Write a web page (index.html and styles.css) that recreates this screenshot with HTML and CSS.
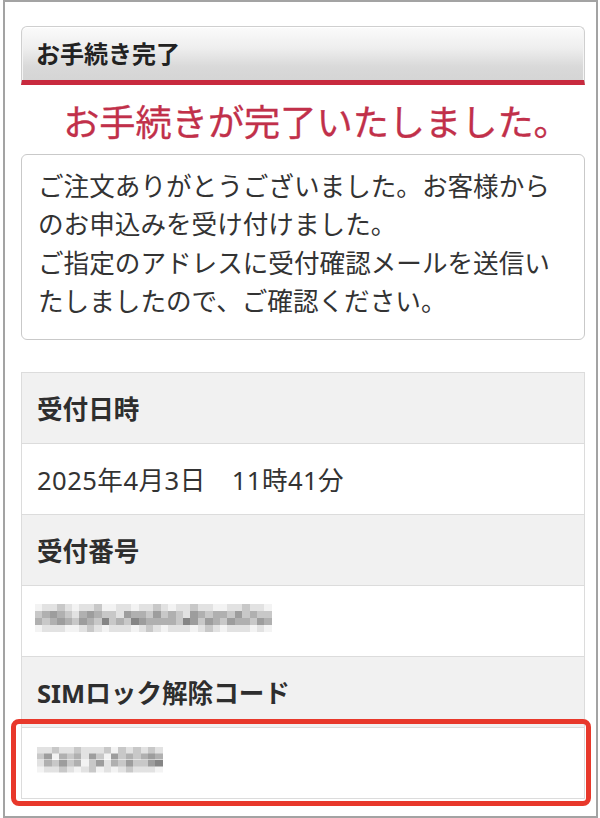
FILE: index.html
```html
<!DOCTYPE html>
<html lang="ja">
<head>
<meta charset="utf-8">
<title>お手続き完了</title>
<link rel="stylesheet" href="styles.css">
</head>
<body>
<div class="frame">
  <div class="panel-head">お手続き完了</div>
  <p class="done-title">お手続きが完了いたしました。</p>
  <div class="message">ご注文ありがとうございました。お客様からのお申込みを受け付けました。<br>ご指定のアドレスに受付確認メールを送信いたしましたので、ご確認ください。</div>
  <dl class="info">
    <dt>受付日時</dt>
    <dd>2025年4月3日　11時41分</dd>
    <dt>受付番号</dt>
    <dd><span class="mosaic mosaic-number" role="img" aria-label="受付番号（マスク済み）"></span></dd>
    <dt>SIMロック解除コード</dt>
    <dd class="highlight"><span class="mosaic mosaic-code" role="img" aria-label="SIMロック解除コード（マスク済み）"></span></dd>
  </dl>
</div>
</body>
</html>
```

FILE: styles.css
```css
html, body {
  margin: 0;
  padding: 0;
  background: #ffffff;
}

body {
  width: 600px;
  height: 818px;
  overflow: hidden;
  font-family: "Noto Sans", "Noto Sans CJK JP", sans-serif;
  color: #333333;
}

.frame {
  box-sizing: border-box;
  height: 818px;
  margin: 0 2px 0 3px;
  border: 2px solid #a3a3a3;
  padding: 24px 11px 0 16px;
}

.panel-head {
  height: 53px;
  line-height: 53px;
  padding-left: 14px;
  border: 1px solid #cfcfcf;
  border-bottom: 5px solid #c82a3e;
  border-radius: 6px 6px 0 0;
  background: linear-gradient(to bottom, #fbfbfb 0%, #eeeeee 40%, #d9d9d9 75%, #d5d5d5 100%);
  box-shadow: inset 0 1px 0 #ffffff, inset 1px 0 0 #f4f4f4, inset -1px 0 0 #f4f4f4;
  font-size: 24px;
  font-weight: bold;
  color: #222222;
}

.done-title {
  margin: 13px 0 8px;
  padding-left: 27px;
  text-align: center;
  font-size: 36.2px;
  font-weight: normal;
  line-height: 48px;
  color: #c1304a;
  -webkit-text-stroke: 0.3px #c1304a;
}

.message {
  border: 1px solid #c9c9c9;
  border-radius: 6px;
  padding: 13px 16px 17px;
  font-size: 25.6px;
  line-height: 38.4px;
  color: #333333;
}

.info {
  margin: 32px 0 0;
  border: 1px solid #dcdcdc;
}

.info dt,
.info dd {
  margin: 0;
  box-sizing: border-box;
  height: 71px;
  border-top: 1px solid #dcdcdc;
  padding: 0 15px;
  display: flex;
  align-items: center;
  font-size: 25.6px;
}

.info dt:first-child {
  height: 70px;
  border-top: 0;
}

.info dt {
  background: #f1f1f1;
  font-weight: bold;
  color: #2e2e2e;
}

.info dd {
  background: #ffffff;
  color: #333333;
  letter-spacing: 0.45px;
}

.highlight {
  position: relative;
}

.highlight::after {
  content: "";
  position: absolute;
  top: -9px;
  bottom: -8px;
  left: -11px;
  right: -7px;
  border: 5px solid #e8382b;
  border-radius: 8px;
  pointer-events: none;
}

.mosaic {
  --a: #f3f3f3;
  --b: #e2e2e2;
  --c: #c8c8c8;
  --d: #b0b0b0;
  --e: #9d9d9d;
  --f: #858585;
  display: block;
  background-repeat: no-repeat;
}

.mosaic-number {
  width: 236.8px;
  height: 28px;
  margin: 0 0 6px -2px;
  background-size: 100% 7px;
  background-position: 0 0, 0 7px, 0 14px, 0 21px;
  background-image:
    linear-gradient(90deg, var(--a) 0 7.4px, var(--b) 0 14.8px, var(--b) 0 22.2px, var(--c) 0 29.6px, var(--b) 0 37px, var(--a) 0 44.4px, var(--b) 0 51.8px, var(--b) 0 59.2px, var(--c) 0 66.6px, var(--a) 0 74px, var(--a) 0 81.4px, var(--b) 0 88.8px, var(--b) 0 96.2px, var(--a) 0 103.6px, var(--b) 0 111px, var(--b) 0 118.4px, var(--c) 0 125.8px, var(--b) 0 133.2px, var(--a) 0 140.6px, var(--b) 0 148px, var(--b) 0 155.4px, var(--c) 0 162.8px, var(--b) 0 170.2px, var(--b) 0 177.6px, var(--a) 0 185px, var(--a) 0 192.4px, var(--b) 0 199.8px, var(--b) 0 207.2px, var(--c) 0 214.6px, var(--b) 0 222px, var(--b) 0 229.4px, var(--a) 0 236.8px),
    linear-gradient(90deg, var(--c) 0 7.4px, var(--d) 0 14.8px, var(--e) 0 22.2px, var(--d) 0 29.6px, var(--c) 0 37px, var(--b) 0 44.4px, var(--d) 0 51.8px, var(--e) 0 59.2px, var(--d) 0 66.6px, var(--c) 0 74px, var(--c) 0 81.4px, var(--b) 0 88.8px, var(--e) 0 96.2px, var(--d) 0 103.6px, var(--d) 0 111px, var(--c) 0 118.4px, var(--e) 0 125.8px, var(--c) 0 133.2px, var(--d) 0 140.6px, var(--c) 0 148px, var(--b) 0 155.4px, var(--e) 0 162.8px, var(--d) 0 170.2px, var(--c) 0 177.6px, var(--d) 0 185px, var(--d) 0 192.4px, var(--c) 0 199.8px, var(--e) 0 207.2px, var(--c) 0 214.6px, var(--d) 0 222px, var(--c) 0 229.4px, var(--c) 0 236.8px),
    linear-gradient(90deg, var(--d) 0 7.4px, var(--c) 0 14.8px, var(--d) 0 22.2px, var(--e) 0 29.6px, var(--d) 0 37px, var(--c) 0 44.4px, var(--e) 0 51.8px, var(--d) 0 59.2px, var(--c) 0 66.6px, var(--f) 0 74px, var(--c) 0 81.4px, var(--d) 0 88.8px, var(--c) 0 96.2px, var(--f) 0 103.6px, var(--e) 0 111px, var(--d) 0 118.4px, var(--d) 0 125.8px, var(--d) 0 133.2px, var(--d) 0 140.6px, var(--c) 0 148px, var(--f) 0 155.4px, var(--e) 0 162.8px, var(--c) 0 170.2px, var(--e) 0 177.6px, var(--d) 0 185px, var(--c) 0 192.4px, var(--e) 0 199.8px, var(--d) 0 207.2px, var(--d) 0 214.6px, var(--c) 0 222px, var(--e) 0 229.4px, var(--d) 0 236.8px),
    linear-gradient(90deg, var(--a) 0 7.4px, var(--b) 0 14.8px, var(--b) 0 22.2px, var(--b) 0 29.6px, var(--a) 0 37px, var(--a) 0 44.4px, var(--b) 0 51.8px, var(--c) 0 59.2px, var(--b) 0 66.6px, var(--a) 0 74px, var(--b) 0 81.4px, var(--b) 0 88.8px, var(--b) 0 96.2px, var(--a) 0 103.6px, var(--b) 0 111px, var(--c) 0 118.4px, var(--b) 0 125.8px, var(--a) 0 133.2px, var(--b) 0 140.6px, var(--b) 0 148px, var(--b) 0 155.4px, var(--a) 0 162.8px, var(--b) 0 170.2px, var(--c) 0 177.6px, var(--b) 0 185px, var(--a) 0 192.4px, var(--b) 0 199.8px, var(--b) 0 207.2px, var(--b) 0 214.6px, var(--a) 0 222px, var(--b) 0 229.4px, var(--a) 0 236.8px);
}

.mosaic-code {
  width: 125.8px;
  height: 26px;
  margin: 0 0 6px 0;
  background-size: 100% 6.5px;
  background-position: 0 0, 0 6.5px, 0 13px, 0 19.5px;
  background-image:
    linear-gradient(90deg, var(--b) 0 7.4px, var(--b) 0 14.8px, var(--c) 0 22.2px, var(--b) 0 29.6px, var(--b) 0 37px, var(--c) 0 44.4px, var(--b) 0 51.8px, var(--b) 0 59.2px, var(--b) 0 66.6px, var(--c) 0 74px, var(--a) 0 81.4px, var(--c) 0 88.8px, var(--b) 0 96.2px, var(--c) 0 103.6px, var(--b) 0 111px, var(--c) 0 118.4px, var(--b) 0 125.8px),
    linear-gradient(90deg, var(--c) 0 7.4px, var(--e) 0 14.8px, var(--a) 0 22.2px, var(--d) 0 29.6px, var(--c) 0 37px, var(--d) 0 44.4px, var(--b) 0 51.8px, var(--e) 0 59.2px, var(--c) 0 66.6px, var(--a) 0 74px, var(--e) 0 81.4px, var(--c) 0 88.8px, var(--d) 0 96.2px, var(--c) 0 103.6px, var(--d) 0 111px, var(--e) 0 118.4px, var(--d) 0 125.8px),
    linear-gradient(90deg, var(--b) 0 7.4px, var(--d) 0 14.8px, var(--c) 0 22.2px, var(--e) 0 29.6px, var(--c) 0 37px, var(--d) 0 44.4px, var(--a) 0 51.8px, var(--c) 0 59.2px, var(--e) 0 66.6px, var(--b) 0 74px, var(--d) 0 81.4px, var(--c) 0 88.8px, var(--e) 0 96.2px, var(--c) 0 103.6px, var(--c) 0 111px, var(--e) 0 118.4px, var(--f) 0 125.8px),
    linear-gradient(90deg, var(--a) 0 7.4px, var(--b) 0 14.8px, var(--b) 0 22.2px, var(--c) 0 29.6px, var(--b) 0 37px, var(--a) 0 44.4px, var(--b) 0 51.8px, var(--c) 0 59.2px, var(--a) 0 66.6px, var(--b) 0 74px, var(--a) 0 81.4px, var(--b) 0 88.8px, var(--c) 0 96.2px, var(--b) 0 103.6px, var(--b) 0 111px, var(--b) 0 118.4px, var(--a) 0 125.8px);
}
```
